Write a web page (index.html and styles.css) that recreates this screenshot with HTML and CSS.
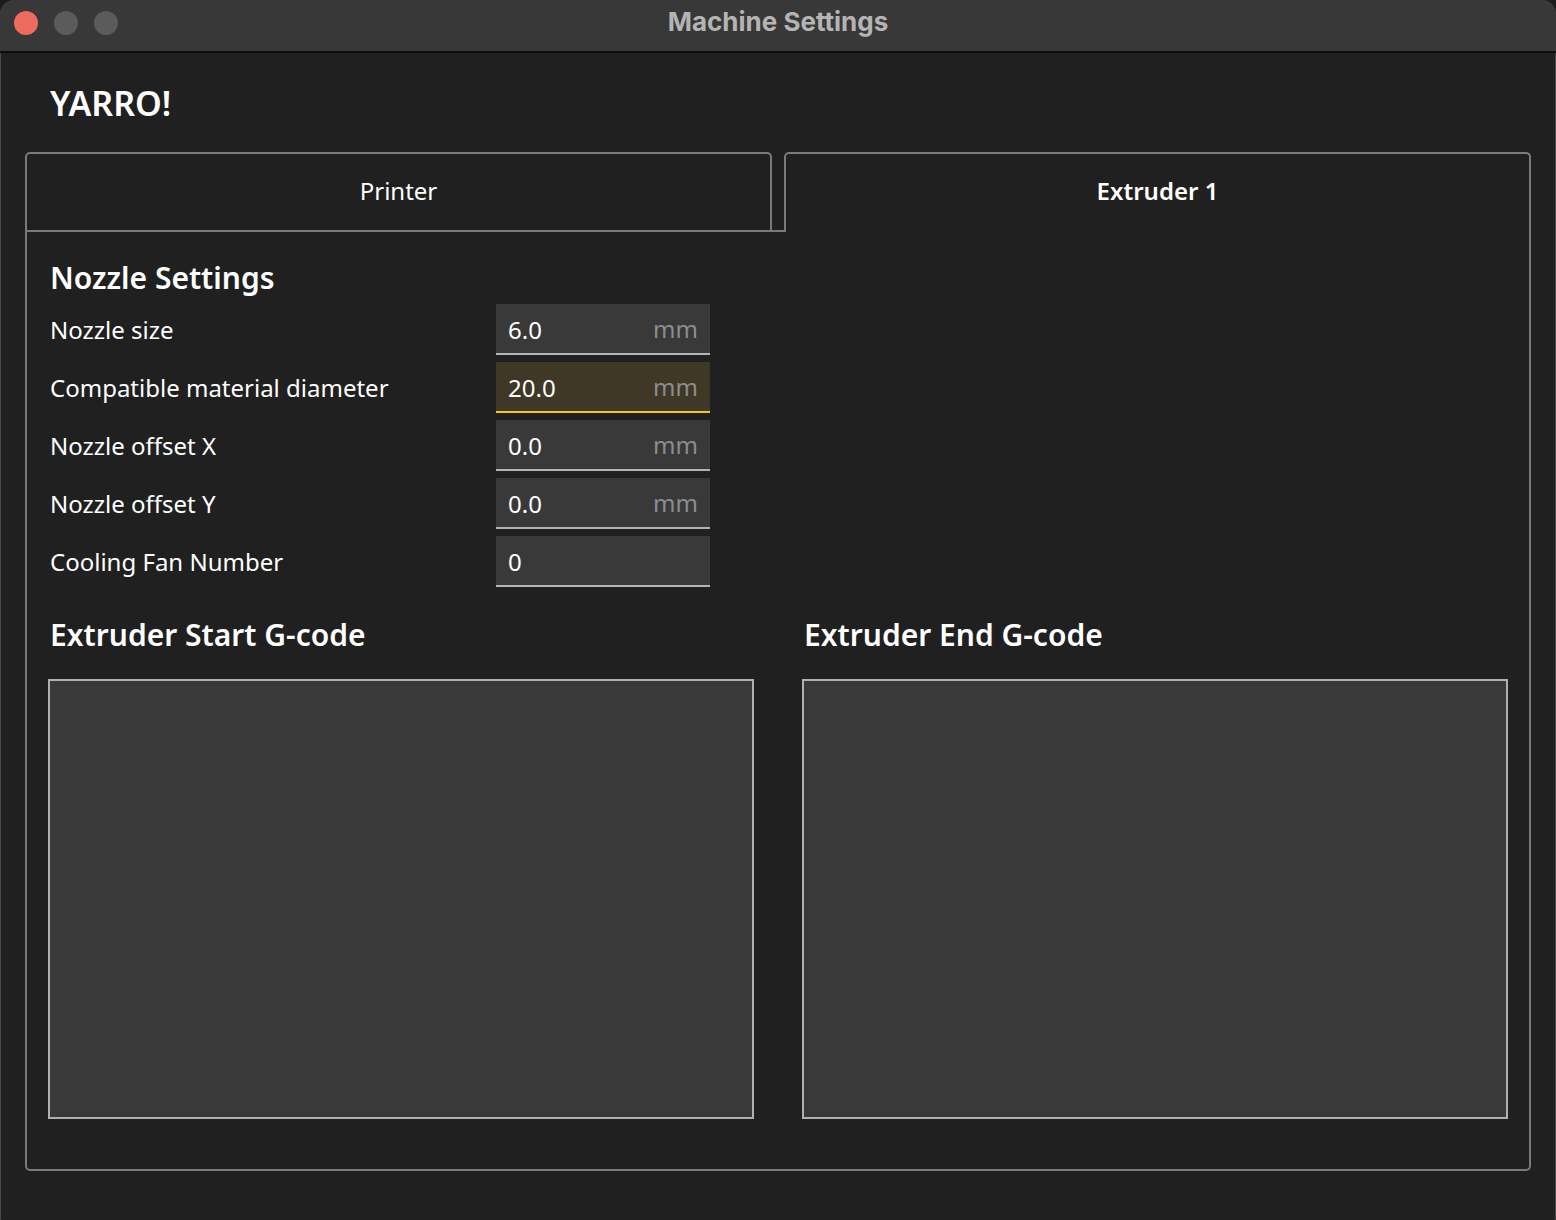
FILE: index.html
```html
<!DOCTYPE html>
<html>
<head>
<meta charset="utf-8">
<title>Machine Settings</title>
<link rel="stylesheet" href="styles.css">
</head>
<body>
<div class="window">
  <div class="titlebar">
    <div class="lights">
      <span class="light close"></span>
      <span class="light"></span>
      <span class="light"></span>
    </div>
    <div class="title">Machine Settings</div>
  </div>
  <div class="content">
    <h1 class="machine-name">YARRO!</h1>
    <div class="tabs">
      <div class="tab">Printer</div>
      <div class="tab-gap"></div>
      <div class="tab active">Extruder 1</div>
    </div>
    <div class="panel">
      <h2 class="section-title">Nozzle Settings</h2>
      <div class="form">
        <div class="label">Nozzle size</div>
        <div class="field"><span class="value">6.0</span><span class="unit">mm</span></div>
        <div class="label">Compatible material diameter</div>
        <div class="field focused"><span class="value">20.0</span><span class="unit">mm</span></div>
        <div class="label">Nozzle offset X</div>
        <div class="field"><span class="value">0.0</span><span class="unit">mm</span></div>
        <div class="label">Nozzle offset Y</div>
        <div class="field"><span class="value">0.0</span><span class="unit">mm</span></div>
        <div class="label">Cooling Fan Number</div>
        <div class="field"><span class="value">0</span></div>
      </div>
      <div class="gcode">
        <div class="gcode-col">
          <h2 class="section-title">Extruder Start G-code</h2>
          <div class="code-area"></div>
        </div>
        <div class="gcode-col">
          <h2 class="section-title">Extruder End G-code</h2>
          <div class="code-area"></div>
        </div>
      </div>
    </div>
  </div>
</div>
</body>
</html>
```

FILE: styles.css
```css
html, body {
  margin: 0;
  padding: 0;
  background: #1c1c1c;
}

body {
  width: 1556px;
  height: 1220px;
  overflow: hidden;
  font-family: "Noto Sans", "Open Sans", sans-serif;
  color: #ffffff;
}

.window {
  box-sizing: border-box;
  width: 1556px;
  height: 1232px;
  background: #202020;
  border-radius: 14px;
  overflow: hidden;
  outline: 1px solid #4a4a4a;
  outline-offset: -1px;
}

.titlebar {
  position: relative;
  box-sizing: border-box;
  height: 53px;
  background: #383838;
  border-bottom: 2px solid #0e0e0e;
  display: flex;
  align-items: center;
  justify-content: center;
}

.lights {
  position: absolute;
  left: 14px;
  top: 11px;
  display: flex;
  gap: 16px;
}

.light {
  width: 24px;
  height: 24px;
  border-radius: 50%;
  background: #5b5b5b;
}

.light.close {
  background: #ec6a5e;
}

.title {
  font-family: Inter, "Liberation Sans", sans-serif;
  font-weight: 700;
  font-size: 26px;
  color: #b4b4b4;
  margin-top: -8px;
}

.content {
  padding: 0 25px 0 25px;
}

.machine-name {
  margin: 0;
  height: 99px;
  display: flex;
  align-items: center;
  padding-left: 25px;
  font-size: 34px;
  font-weight: 600;
  line-height: 1;
}

.tabs {
  display: flex;
  height: 80px;
}

.tab {
  box-sizing: border-box;
  width: 747px;
  height: 80px;
  border: 2px solid #7a7a7a;
  border-radius: 5px 5px 0 0;
  display: flex;
  align-items: center;
  justify-content: center;
  font-size: 24px;
  color: #ffffff;
  padding-bottom: 4px;
}

.tab.active {
  border-bottom: none;
  font-weight: 600;
  padding-bottom: 6px;
  border-radius: 5px 5px 0 0;
}

.tab-gap {
  box-sizing: border-box;
  width: 12px;
  height: 80px;
  border-bottom: 2px solid #7a7a7a;
}

.panel {
  box-sizing: border-box;
  width: 1506px;
  height: 939px;
  border: 2px solid #7a7a7a;
  border-top: none;
  border-radius: 0 0 5px 5px;
  padding: 26px 21px 0 21px;
}

.section-title {
  margin: 0;
  font-size: 30px;
  font-weight: 600;
  line-height: 40px;
  padding-left: 2px;
}

.form {
  margin-top: 6px;
  display: grid;
  grid-template-columns: 448px 214px;
  grid-auto-rows: 51px;
  row-gap: 7px;
  align-items: center;
}

.label {
  font-size: 24px;
  padding-left: 2px;
  color: #ffffff;
}

.field {
  box-sizing: border-box;
  height: 51px;
  background: #393939;
  border-bottom: 2px solid #b3b3b3;
  display: flex;
  align-items: center;
  justify-content: space-between;
  padding: 0 12px 0 12px;
  font-size: 24px;
}

.field.focused {
  background: #3f3827;
  border-bottom-color: #f7c41f;
}

.value {
  color: #ffffff;
  margin-top: 1px;
}

.unit {
  color: #8c8c8c;
  margin-top: 0;
}

.gcode {
  margin-top: 28px;
  display: flex;
  gap: 48px;
}

.gcode-col {
  width: 706px;
}

.code-area {
  box-sizing: border-box;
  margin-top: 24px;
  width: 706px;
  height: 440px;
  background: #393939;
  border: 2px solid #b0b0b0;
}
```
